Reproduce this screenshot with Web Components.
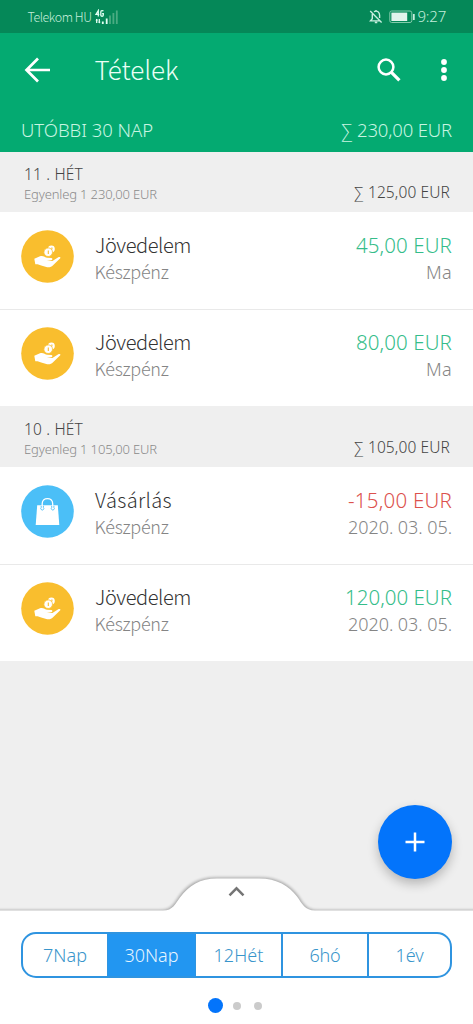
<!DOCTYPE html>
<html lang="hu">
<head>
<meta charset="utf-8">
<title>Tételek</title>
<style>
html,body{margin:0;height:100%;background:#efefef}
body{font-family:"Noto Sans","Open Sans",sans-serif;font-weight:300;overflow:hidden}
</style>
</head>
<body>
<items-screen></items-screen>
<script>
function define(name, html, setup) {
  const template = document.createElement('template');
  template.innerHTML = html;
  customElements.define(name, class extends HTMLElement {
    constructor() {
      super();
      this.attachShadow({mode: 'open'}).append(template.content.cloneNode(true));
    }
    connectedCallback() { if (setup) setup(this, this.shadowRoot); }
  });
}

/* One line of text whose tracking is adjusted to fill the width in "w". */
define('fit-text', `<style>
:host{display:block;white-space:pre;flex:none}
span{display:inline-block}
</style><span><slot></slot></span>`, (el, root) => {
  const span = root.querySelector('span');
  const w = +el.getAttribute('w');
  el.style.width = w + 'px';
  const extra = (w - span.getBoundingClientRect().width) / el.textContent.length;
  span.style.letterSpacing = extra.toFixed(3) + 'px';
});

define('status-bar', `<style>
:host{display:flex;height:33px;background:#058858;color:#c3eddb;align-items:center;box-sizing:border-box;padding:0 27px 0 27.5px}
.op{font:300 12.5px/32px "Noto Sans CJK SC",sans-serif}
.time{font-size:15px;line-height:33px;margin-left:3px}
.sig{margin-left:3px;margin-right:auto}
svg{flex:none;display:block}
</style>
<fit-text class="op" w="64">Telekom HU</fit-text>
<svg class="sig" width="24" height="16" viewBox="0 0 24 16"><g fill="none" stroke="#e2fff3" stroke-width="1.3"><path d="M3.3 7.5V1.6L1 5.3H4.3M8.3 2.3C8 1.4 5.8 1.2 5.8 3V6C5.8 7.7 8.3 7.6 8.3 6V4.7H7.1"/></g><path d="M1.7 10v4M4.3 10v4" stroke="#e2fff3" stroke-width="1.3"/><path d="M.5 11.5l1.2-1.7 1.3 1.7M3.2 12.8l1.2 1.6 1.3-1.6" fill="#e2fff3"/><path d="M7.8 12.5V15M11.7 9.5V15" stroke="#e2fff3" stroke-width="1.8"/><path d="M15 6.5V15M18.4 4V15M21.8 1.5V15" stroke="#4aab82" stroke-width="1.8"/></svg>
<svg width="14" height="15" viewBox="0 0 14 15" fill="none" stroke="#c8eedf" stroke-width="1.4"><path d="M1.2 2l11.4 11.6M5 2.7C8.3 1 10.6 3.4 10.6 6.2V9M3.3 5V9.7L1.5 11.9H10.5M7 1v1.4M5.8 13.5H8.3"/></svg>
<svg style="margin-left:6px" width="26" height="14" viewBox="0 0 26 14"><rect x=".8" y="1" width="22" height="11.5" rx="1.8" fill="none" stroke="#83cbab" stroke-width="1"/><rect x="2.4" y="2.6" width="15.8" height="8.4" fill="#e3f4ec"/><path d="M24.8 4v6" stroke="#c8eedf" stroke-width="1.8"/></svg>
<fit-text class="time" w="28.5">9:27</fit-text>`);

define('app-bar', `<style>
:host{display:block;height:119px;background:#04aa71;color:#fff}
.top{display:flex;height:73px;align-items:center;padding:0 25px 0 24px}
svg{display:block;flex:none}
.title{font:300 26px/70px "Noto Sans CJK SC",sans-serif;height:72px;margin-left:43.5px;margin-right:auto;color:#eafff6}
.sum{display:flex;justify-content:space-between;padding:1px 21px 0 21px;font-size:18.5px;line-height:46px;color:#c8f5e2}
</style>
<div class="top">
<svg width="27" height="26" viewBox="0 0 27 26" fill="none" stroke="#fff" stroke-width="2.7"><path d="M26 13H2.5M14 1.5L2.5 13 14 24.5"/></svg>
<fit-text class="title" w="84">Tételek</fit-text>
<svg width="24" height="24" viewBox="0 0 24 24" fill="none" stroke="#fff"><circle cx="9" cy="9" r="7.4" stroke-width="2.5"/><path d="M14.4 14.4l8 8" stroke-width="3.2"/></svg>
<svg style="margin-left:39px" width="8" height="24" viewBox="0 0 8 24" fill="#fff"><circle cx="4" cy="4" r="2.9"/><circle cx="4" cy="12" r="2.9"/><circle cx="4" cy="20" r="2.9"/></svg>
</div>
<div class="sum"><fit-text w="132">UTÓBBI 30 NAP</fit-text><fit-text w="111">∑ 230,00 EUR</fit-text></div>`);

/* Heading of a week: name and balance on the left, total on the right. */
define('week-head', `<style>
:host{display:flex;justify-content:space-between;height:var(--h,60px);box-sizing:border-box;background:#efefef;padding:var(--pt,11px) 23px 0 24px}
.n{font-size:15.5px;line-height:23px;color:#444}
.b{font-size:13px;line-height:16px;color:#8a8a8a}
.t{font-size:15.5px;line-height:24px;color:#444;margin-top:17px}
</style><div><fit-text class="n" w="59"></fit-text><fit-text class="b" w="133"></fit-text></div><fit-text class="t" w="96"></fit-text>`);

define('coin-hand-icon', `<style>:host{display:block}svg{display:block}</style>
<svg width="53" height="53" viewBox="0 0 53 53"><circle cx="26.5" cy="26.5" r="26.3" fill="#f9be2e"/><g fill="#fff"><circle cx="30.4" cy="18.9" r="3.4"/><circle cx="27.2" cy="22.2" r="4.3" stroke="#f9be2e" stroke-width=".8"/><path d="M13.3 28.8L19 26.2C22 25.2 24 27.2 26.3 27.8L30.5 28C32 28.5 31.6 30 30 30.3L25.8 30.8 31.4 30.9 37.3 27.2C38.8 26.4 40.2 27.2 39 28.6L31.8 35.5C30.5 36.8 28.5 37.6 26.2 37.2L20.2 35.6 16.6 34.2 14.3 34.2Z"/></g><path d="M27.3 20.4v3.6M30.9 17.6v2" stroke="#f9be2e" stroke-width="1.1" fill="none"/></svg>`);

define('bag-icon', `<style>:host{display:block}svg{display:block}</style>
<svg width="53" height="53" viewBox="0 0 53 53"><circle cx="26.5" cy="26.5" r="26.3" fill="#4bbff7"/><path d="M16.2 20.3H36.8L38.3 40H14.7Z" fill="#fff"/><path d="M21.2 23V18.7C21.2 11.8 31.7 11.8 31.7 18.7V23" fill="none" stroke="#fff" stroke-width="1.3"/><g fill="none" stroke="#4bbff7" stroke-width=".9"><path d="M20.2 20.8v1.7a1.5 1.5 0 1 0 2.2 0v-1.7M30.7 20.8v1.7a1.5 1.5 0 1 0 2.2 0v-1.7"/></g></svg>`);

define('entry-row', `<style>
:host{display:flex;height:97px;box-sizing:border-box;background:#fff;padding:18px 21px 0}
.l{font-family:"Noto Sans CJK SC",sans-serif;margin:0 auto 0 21px}
.a{font-size:20px;line-height:30px;height:30px;color:#333}
.b{font-size:18px;line-height:24px;color:#858585}
.l .a{height:29px}
.l .b{margin-left:-.5px}
.r{display:flex;flex-direction:column;align-items:flex-end}
.r .a{font-size:20.5px;color:var(--c)}
:host([line]){height:98px;margin-bottom:-1px;border-bottom:1px solid #e9e9e9}
:host(:not([line])){background:linear-gradient(transparent 1px,#fff 1px)}
</style><slot></slot><div class="l"><fit-text class="a"></fit-text><fit-text class="b" w="74">Készpénz</fit-text></div><div class="r"><fit-text class="a"></fit-text><fit-text class="b"></fit-text></div>`);

/* Fills the text lines of an element before it is attached to the page. */
function fill(el, lines) {
  el.shadowRoot.querySelectorAll('fit-text').forEach((t, i) => {
    if (!lines[i]) return;
    t.textContent = lines[i][0];
    if (lines[i][1]) t.setAttribute('w', lines[i][1]);
  });
  return el;
}

define('add-button', `<style>
:host{display:grid;place-items:center;width:74px;height:74px;border-radius:50%;background:#0374fb;box-shadow:0 5px 11px rgba(0,0,0,.24)}
</style><svg width="20" height="20" viewBox="0 0 20 20"><path d="M10 .5V19.5M.5 10H19.5" stroke="#fff" stroke-width="2.5"/></svg>`);

define('range-picker', `<style>
:host{display:grid;grid-template-columns:84px 88px 86px 86px 1fr;width:431px;height:46px;box-sizing:border-box;border:2.5px solid #2f94e0;border-radius:15px;overflow:hidden;margin:0 auto;color:#3995cb;font-size:18px;line-height:43px;background:#fff}
div{display:flex;justify-content:center}
div+div{border-left:2.5px solid #2f94e0}
div+div.on,.on+div{border-left-width:1px}
.on{background:#2296f1;color:#e6f5ff}
</style><div><fit-text w="44">7Nap</fit-text></div><div class="on"><fit-text w="54">30Nap</fit-text></div><div><fit-text w="50">12Hét</fit-text></div><div><fit-text w="31">6hó</fit-text></div><div><fit-text w="28">1év</fit-text></div>`);

define('bottom-sheet', `<style>
:host{display:block;height:154px}
.edge{display:block;width:473px;height:154px;position:absolute;left:0;bottom:0;z-index:-1}
.in{padding-top:62px}
.dots{display:flex;justify-content:center;align-items:center;height:15px;margin-top:20px;gap:13px;padding-right:4px}
i{width:8px;height:8px;border-radius:50%;background:#cbcbcb}
i.on{width:15px;height:15px;background:#0374fb;margin-right:-3px}
</style>
<svg class="edge" viewBox="0 0 473 154"><defs><filter id="s" x="-5%" y="-10%" width="110%" height="120%"><feGaussianBlur stdDeviation="1.8"/></filter></defs><path d="M-9 40H161C171 40 174 34 179 26.5C188 14 199 7.5 216 7.5H260C278 7.5 290 15 298 25.5C303 33 306 40 317 40H482V165H-9Z" fill="#000" opacity=".3" filter="url(#s)"/><path d="M-9 40.5H163C173 40.5 175 34 180 27.5C189 15.5 200 8.5 217 8.5H259C277 8.5 289 16 297 26.5C302 33.5 305 40.5 315 40.5H482V165H-9Z" fill="#fff"/><path d="M229.5 25.3L236.5 18.3 243.5 25.3" fill="none" stroke="#757575" stroke-width="2.5"/></svg>
<div class="in"><range-picker></range-picker><div class="dots"><i class="on"></i><i></i><i></i></div></div>`);

define('items-screen', `<style>
:host{display:flex;flex-direction:column;position:relative;width:473px;height:1024px;background:#efefef;overflow:hidden;isolation:isolate}
main{flex:1}
add-button{position:absolute;right:21px;top:804.5px}
</style>
<status-bar></status-bar>
<app-bar></app-bar>
<main></main>
<bottom-sheet></bottom-sheet>
<add-button></add-button>`, (el, root) => {
  const main = root.querySelector('main');
  const make = (tag, lines, style) => {
    const e = document.createElement(tag);
    e.style.cssText = style || '';
    return fill(e, lines);
  };
  const row = (icon, lines, color, line) => {
    const e = make('entry-row', lines, `--c:${color}`);
    e.append(document.createElement(icon));
    if (line) e.setAttribute('line', '');
    main.append(e);
  };
  const green = '#35bd8a', red = '#dc514d';
  main.append(make('week-head', [['11 . HÉT'], ['Egyenleg 1 230,00 EUR'], ['∑ 125,00 EUR']]));
  row('coin-hand-icon', [['Jövedelem', 96], null, ['45,00 EUR', 96], ['Ma', 26]], green, true);
  row('coin-hand-icon', [['Jövedelem', 96], null, ['80,00 EUR', 96], ['Ma', 26]], green);
  main.append(make('week-head', [['10 . HÉT'], ['Egyenleg 1 105,00 EUR'], ['∑ 105,00 EUR']], '--h:61px;--pt:12px'));
  row('bag-icon', [['Vásárlás', 77], null, ['-15,00 EUR', 104], ['2020. 03. 05.', 104]], red, true);
  row('coin-hand-icon', [['Jövedelem', 96], null, ['120,00 EUR', 107], ['2020. 03. 05.', 104]], green);
});
</script>
</body>
</html>
